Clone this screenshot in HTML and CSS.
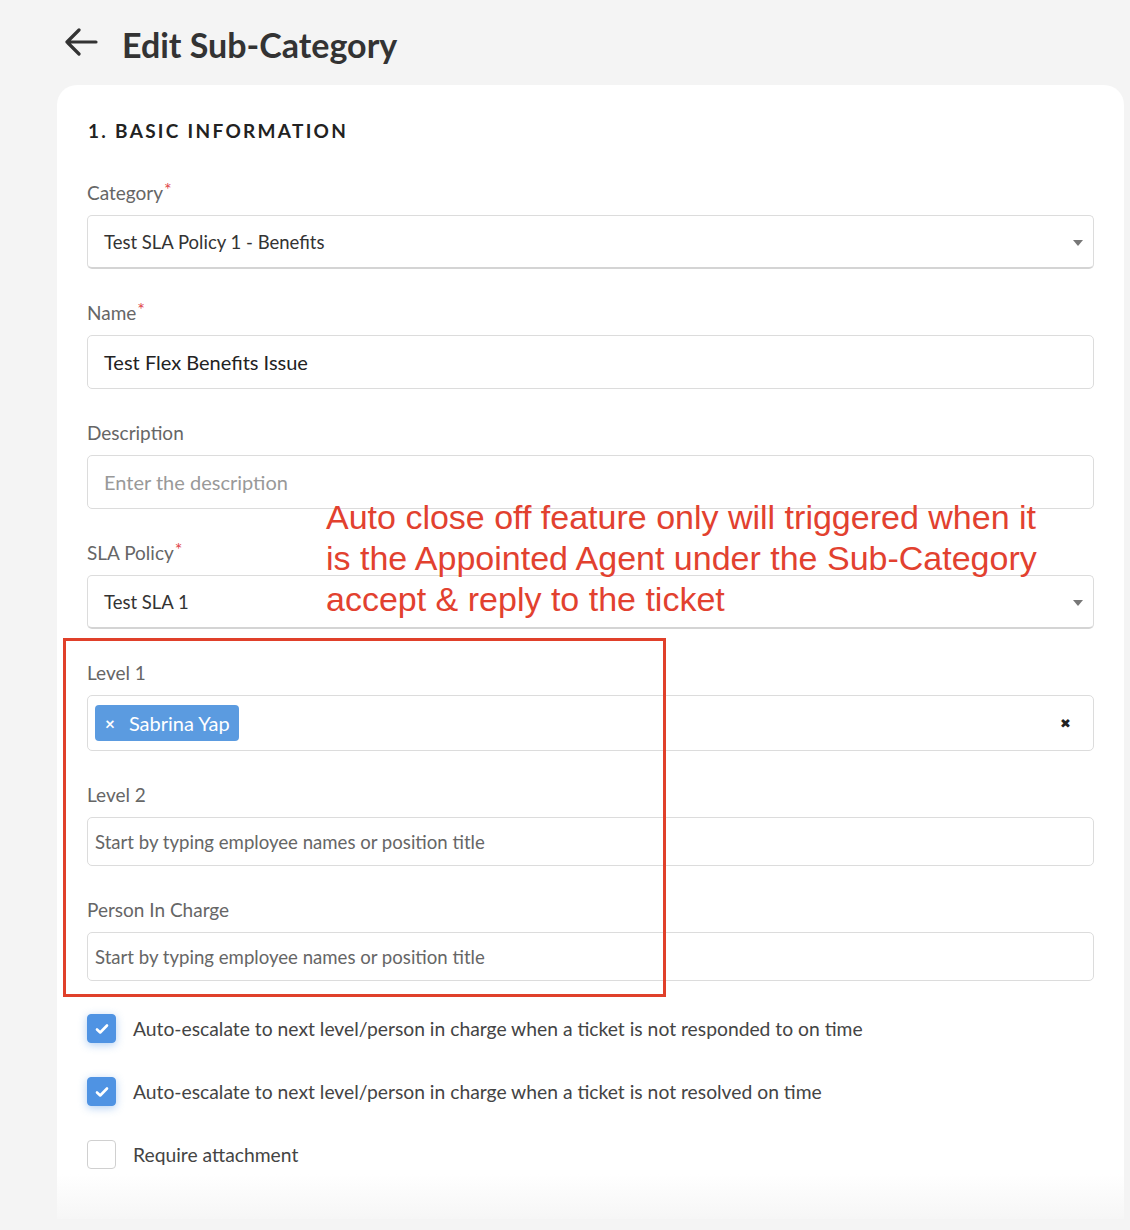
FILE: index.html
```html
<!DOCTYPE html>
<html lang="en">
<head>
    <meta charset="UTF-8">
    <meta name="viewport" content="width=device-width, initial-scale=1.0">
    <title>Edit Sub-Category</title>
    <link rel="stylesheet" href="styles.css">
</head>
<body>
    <div class="page">
        <div class="topbar">
            <svg class="back" width="34" height="28" viewBox="0 0 34 28" fill="none" stroke="#333" stroke-width="3.2" stroke-linecap="round" stroke-linejoin="round">
                <path d="M32 14H3M15 2L3 14l12 12"/>
            </svg>
            <h1>Edit Sub-Category</h1>
        </div>

        <div class="card">
            <h2 class="section-title">1. BASIC INFORMATION</h2>

            <div class="field">
                <label>Category<span class="req">*</span></label>
                <div class="input select">Test SLA Policy 1 - Benefits <span class="caret"></span></div>
            </div>

            <div class="field">
                <label>Name<span class="req">*</span></label>
                <div class="input value-strong">Test Flex Benefits Issue</div>
            </div>

            <div class="field">
                <label>Description</label>
                <div class="input placeholder">Enter the description</div>
            </div>

            <div class="field">
                <label>SLA Policy<span class="req">*</span></label>
                <div class="input select">Test SLA 1 <span class="caret"></span></div>
            </div>

            <div class="field">
                <label>Level 1</label>
                <div class="input tags">
                    <span class="chip"><span class="chip-x">×</span>Sabrina Yap</span>
                    <span class="clear">✖</span>
                </div>
            </div>

            <div class="field">
                <label>Level 2</label>
                <div class="input search">Start by typing employee names or position title</div>
            </div>

            <div class="field">
                <label>Person In Charge</label>
                <div class="input search">Start by typing employee names or position title</div>
            </div>

            <div class="checks">
                <div class="check-row">
                    <span class="box checked">
                        <svg width="16" height="16" viewBox="0 0 16 16" fill="none" stroke="#fff" stroke-width="2.6" stroke-linecap="round" stroke-linejoin="round"><path d="M3 8.5l3.2 3L13 4.5"/></svg>
                    </span>
                    <span>Auto-escalate to next level/person in charge when a ticket is not responded to on time</span>
                </div>
                <div class="check-row">
                    <span class="box checked">
                        <svg width="16" height="16" viewBox="0 0 16 16" fill="none" stroke="#fff" stroke-width="2.6" stroke-linecap="round" stroke-linejoin="round"><path d="M3 8.5l3.2 3L13 4.5"/></svg>
                    </span>
                    <span>Auto-escalate to next level/person in charge when a ticket is not resolved on time</span>
                </div>
                <div class="check-row">
                    <span class="box"></span>
                    <span>Require attachment</span>
                </div>
            </div>

            <div class="note">Auto close off feature only will triggered when it<br>is the Appointed Agent under the Sub-Category<br>accept &amp; reply to the ticket</div>
            <div class="highlight"></div>
        </div>
    </div>
</body>
</html>
```

FILE: styles.css
```css
body {
    margin: 0;
    padding: 0;
    background: #f4f4f4;
    font-family: Lato, "Open Sans", sans-serif;
    color: #333;
}
.page { padding: 0 6px 0 57px; }
.topbar { display: flex; align-items: center; gap: 24px; height: 85px; padding-left: 7px; }
.topbar h1 { margin: 0; font-size: 34px; font-weight: 700; color: #333; position: relative; top: 2px; }
.back { position: relative; top: -1px; }

.card {
    position: relative;
    background: linear-gradient(to bottom, #fff calc(100% - 45px), #f6f6f6);
    border-radius: 20px 20px 0 0;
    padding: 33px 30px 50px 30px;
    min-height: 1062px;
    box-sizing: border-box;
}
.section-title { margin: 0 0 38px 1px; font-size: 19px; font-weight: 700; letter-spacing: 2.3px; color: #222; line-height: 26px; }

.field { margin-bottom: 33px; }
.field label { display: block; font-size: 19px; color: #666; line-height: 22px; margin-bottom: 11px; }
.req { color: #e0454a; font-size: 18px; vertical-align: top; position: relative; top: -4px; margin-left: 1px; }

.input {
    display: flex;
    align-items: center;
    height: 54px;
    box-sizing: border-box;
    border: 1px solid #dcdcdc;
    border-radius: 5px;
    padding: 0 16px;
    font-size: 18.5px;
    color: #333;
    background: #fff;
}
.value-strong { font-size: 20px; color: #222; }
.placeholder { font-size: 20px; color: #999; }
.select { position: relative; border-bottom: 2px solid #d4d4d4; }
.caret {
    position: absolute;
    right: 10px;
    top: 24px;
    border-left: 5px solid transparent;
    border-right: 5px solid transparent;
    border-top: 6px solid #777;
}
.tags { height: 56px; padding: 0 7px; justify-content: space-between; }
.chip {
    display: inline-flex;
    align-items: center;
    height: 36px;
    padding: 0 9px 0 10px;
    background: #5b9be0;
    color: #fff;
    border-radius: 4px;
    font-size: 20px;
}
.chip-x { font-size: 17px; font-weight: 700; margin-right: 14px; }
.clear { font-size: 13px; color: #222; margin-right: 15px; }
.search { height: 49px; padding: 0 7px; font-size: 18.6px; color: #666; }

.checks { display: flex; flex-direction: column; gap: 34px; margin-top: 1px; }
.check-row { display: flex; align-items: center; gap: 17px; font-size: 19.3px; color: #444; }
.box {
    width: 29px;
    height: 29px;
    box-sizing: border-box;
    border: 1px solid #d0d0d0;
    border-radius: 4px;
    display: flex;
    align-items: center;
    justify-content: center;
    flex-shrink: 0;
    background: #fff;
}
.box.checked { background: #4f93e3; border-color: #4f93e3; box-shadow: 0 2px 8px rgba(79, 147, 227, 0.45); }

.note {
    position: absolute;
    left: 269px;
    top: 412px;
    font-family: "Liberation Sans", Arial, sans-serif;
    font-size: 34px;
    line-height: 41px;
    color: #e2412f;
}
.highlight {
    position: absolute;
    left: 6px;
    top: 553px;
    width: 603px;
    height: 359px;
    box-sizing: border-box;
    border: 3px solid #e0402a;
}
```
